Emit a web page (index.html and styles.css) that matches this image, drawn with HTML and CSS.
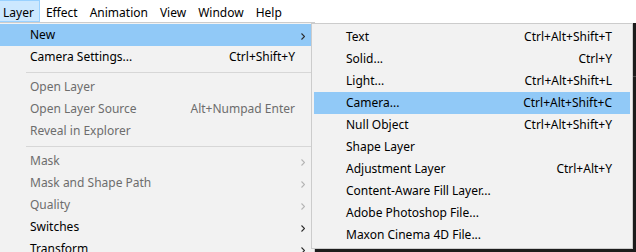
FILE: index.html
```html
<!DOCTYPE html>
<html lang="en">

    <head>
        <meta charset="UTF-8">
        <meta name="viewport" content="width=device-width, initial-scale=1.0">
        <title>Layer menu</title>

        <link rel="stylesheet" href="styles.css">
    </head>

    <body>
        <div class="menubar">
            <span class="bar-item first active">Layer</span>
            <span class="bar-item">Effect</span>
            <span class="bar-item">Animation</span>
            <span class="bar-item">View</span>
            <span class="bar-item">Window</span>
            <span class="bar-item">Help</span>
        </div>

        <div class="workspace">
            <!-- menu principal -->
            <div class="menu">
                <div class="row hover"><span class="label">New</span><span class="key"></span><span class="arrow"><svg width="4" height="7" viewBox="0 0 4 7"><polyline points="0.5,0.5 3.5,3.5 0.5,6.5" fill="none" stroke="#2b2b2b" stroke-width="1.1"/></svg></span></div>
                <div class="row"><span class="label">Camera Settings...</span><span class="key">Ctrl+Shift+Y</span><span class="arrow"></span></div>
                <div class="sep"></div>
                <div class="row off"><span class="label">Open Layer</span><span class="key"></span><span class="arrow"></span></div>
                <div class="row off"><span class="label">Open Layer Source</span><span class="key">Alt+Numpad Enter</span><span class="arrow"></span></div>
                <div class="row off"><span class="label">Reveal in Explorer</span><span class="key"></span><span class="arrow"></span></div>
                <div class="sep"></div>
                <div class="row off"><span class="label">Mask</span><span class="key"></span><span class="arrow"><svg width="4" height="7" viewBox="0 0 4 7"><polyline points="0.5,0.5 3.5,3.5 0.5,6.5" fill="none" stroke="#b4b4b4" stroke-width="1.1"/></svg></span></div>
                <div class="row off"><span class="label">Mask and Shape Path</span><span class="key"></span><span class="arrow"><svg width="4" height="7" viewBox="0 0 4 7"><polyline points="0.5,0.5 3.5,3.5 0.5,6.5" fill="none" stroke="#b4b4b4" stroke-width="1.1"/></svg></span></div>
                <div class="row off"><span class="label">Quality</span><span class="key"></span><span class="arrow"><svg width="4" height="7" viewBox="0 0 4 7"><polyline points="0.5,0.5 3.5,3.5 0.5,6.5" fill="none" stroke="#b4b4b4" stroke-width="1.1"/></svg></span></div>
                <div class="row"><span class="label">Switches</span><span class="key"></span><span class="arrow"><svg width="4" height="7" viewBox="0 0 4 7"><polyline points="0.5,0.5 3.5,3.5 0.5,6.5" fill="none" stroke="#2b2b2b" stroke-width="1.1"/></svg></span></div>
                <div class="row"><span class="label">Transform</span><span class="key"></span><span class="arrow"><svg width="4" height="7" viewBox="0 0 4 7"><polyline points="0.5,0.5 3.5,3.5 0.5,6.5" fill="none" stroke="#2b2b2b" stroke-width="1.1"/></svg></span></div>
            </div>

            <!-- submenu New -->
            <div class="submenu">
                <div class="row"><span class="label">Text</span><span class="key">Ctrl+Alt+Shift+T</span></div>
                <div class="row"><span class="label">Solid...</span><span class="key">Ctrl+Y</span></div>
                <div class="row"><span class="label">Light...</span><span class="key">Ctrl+Alt+Shift+L</span></div>
                <div class="row hover"><span class="label">Camera...</span><span class="key">Ctrl+Alt+Shift+C</span></div>
                <div class="row"><span class="label">Null Object</span><span class="key">Ctrl+Alt+Shift+Y</span></div>
                <div class="row"><span class="label">Shape Layer</span><span class="key"></span></div>
                <div class="row"><span class="label">Adjustment Layer</span><span class="key">Ctrl+Alt+Y</span></div>
                <div class="row"><span class="label">Content-Aware Fill Layer...</span><span class="key"></span></div>
                <div class="row"><span class="label">Adobe Photoshop File...</span><span class="key"></span></div>
                <div class="row"><span class="label">Maxon Cinema 4D File...</span><span class="key"></span></div>
            </div>

            <div class="panel">
                <div class="panel-line"></div>
            </div>
        </div>
    </body>

</html>
```

FILE: styles.css
```css
* {
    margin: 0;
    padding: 0;
    box-sizing: border-box;
}

body {
    width: 100%;
    height: 100vh;
    overflow: hidden;

    background-color: #1c1c1c;
    font-family: "Noto Sans", "Liberation Sans", sans-serif;
    font-size: 12px;
    color: #000;
}

.menubar {
    display: flex;
    height: 23px;
    background-color: #fff;
}

.bar-item {
    height: 22px;
    padding: 3px 5px 0;
    line-height: 17px;
    border: 1px solid transparent;
}

.bar-item.first {
    margin-left: -3px;
}

.bar-item.active {
    background-color: #cce8ff;
    border-color: #99d1ff;
}

.workspace {
    display: flex;
    align-items: flex-start;
}

.menu {
    flex: none;
    width: 318px;
    margin-left: -3px;
    margin-top: -1px;
    padding: 1px 2px;
    border: 1px solid #ccc;

    background-color: #f2f2f2;
}

.submenu {
    flex: none;
    width: 322px;
    margin-left: -4px;
    padding: 2px;
    border: 1px solid #ccc;

    background-color: #f2f2f2;
}

.row {
    display: flex;
    align-items: center;
    height: 22px;
    line-height: 22px;
    white-space: nowrap;
}

.menu .row {
    padding: 0 7px 0 30px;
}

.submenu .row {
    padding: 0 18px 0 32px;
}

.row.hover {
    background-color: #91c9f7;
}

.row.off {
    color: #6d6d6d;
}

.label {
    flex: 1;
}

.arrow {
    display: flex;
    justify-content: flex-end;
    width: 10px;
    padding-top: 2px;
}

.arrow svg {
    display: block;
}

.sep {
    height: 8px;
    padding: 4px 0 3px 26px;
}

.sep::before {
    content: "";
    display: block;
    height: 1px;
    background-color: #d7d7d7;
}

.panel {
    flex: 1;
    padding-top: 53px;
}

.panel-line {
    height: 1px;
    background-color: #4a4a4a;
}
```
